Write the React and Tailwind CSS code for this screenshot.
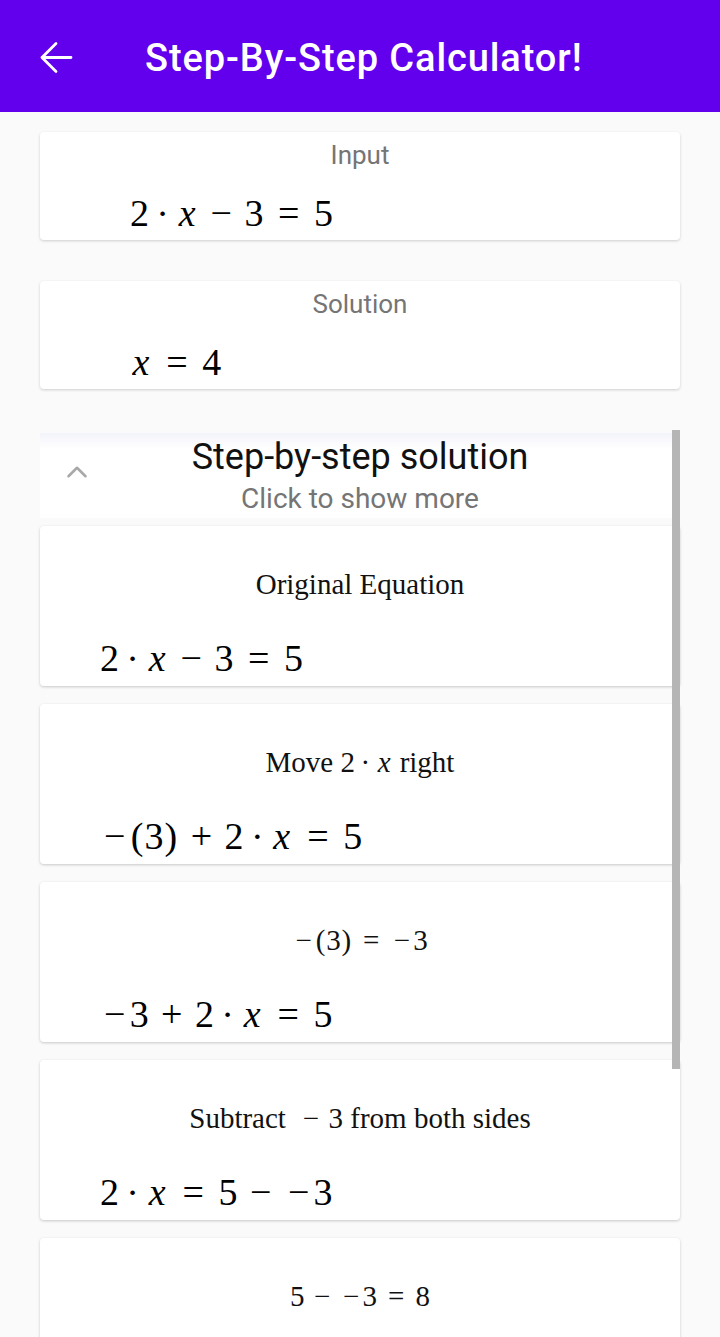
import { ChevronUp } from 'lucide-react'

const serif = { fontFamily: '"Liberation Serif", "DejaVu Serif", serif' }

// math pieces, widths roughly follow KaTeX spacing (in em)
const V = ({ children }) => <span className="inline-block w-[0.57em] text-center italic">{children}</span>
const Bin = ({ children }) => <span className="inline-block w-[1.22em] text-center">{children}</span>
const Rel = ({ children }) => <span className="inline-block w-[1.33em] text-center">{children}</span>
const Dot = () => <span className="inline-block w-[0.72em] text-center">·</span>
const Neg = () => <span className="inline-block w-[0.78em] text-center">−</span>
const P = ({ children }) => <span className="inline-block w-[0.39em] text-center">{children}</span>

function Eq({ children, className = '' }) {
  return (
    <div className={`whitespace-nowrap leading-none text-black ${className}`} style={{ fontFamily: '"Liberation Serif", serif' }}>
      {children}
    </div>
  )
}

function InfoCard({ label, children }) {
  return (
    <div className="h-[108px] bg-white rounded shadow-[0_1px_3px_rgba(0,0,0,0.18)] flex flex-col">
      <div className="text-center text-[26px] leading-none text-[#757575] pt-[10px]" style={{ fontFamily: 'Roboto, sans-serif' }}>
        {label}
      </div>
      <Eq className="text-[38px] pl-[90px] mt-[26px]">{children}</Eq>
    </div>
  )
}

function StepCard({ title, children }) {
  return (
    <div className="h-[160px] bg-white rounded shadow-[0_1px_3px_rgba(0,0,0,0.2)] flex flex-col">
      <div className="text-center text-[29px] leading-none text-[#111] pt-[44px] whitespace-nowrap" style={serif}>
        {title}
      </div>
      {children && <Eq className="text-[38px] pl-[60px] mt-[40px]">{children}</Eq>}
    </div>
  )
}

export default function App() {
  return (
    <div className="h-[1337px] overflow-hidden bg-[#fafafa]" style={{ fontFamily: 'Roboto, sans-serif' }}>
      {/* App bar */}
      <header className="h-[112px] bg-[#6200ee] flex items-center">
        <svg className="ml-[39px] mt-[2px]" width="34" height="33" viewBox="0 0 34 33" fill="none">
          <path d="M32 16.5H3M17 2.5L3 16.5l14 14" stroke="white" strokeWidth="2.8" strokeLinecap="round" strokeLinejoin="round" />
        </svg>
        <h1 className="ml-[72px] mt-[4px] text-white text-[38px] font-medium tracking-[0.9px]">Step-By-Step Calculator!</h1>
      </header>

      <main className="px-10 pt-5">
        <InfoCard label="Input">
          2<Dot /><V>x</V><Bin>−</Bin>3<Rel>=</Rel>5
        </InfoCard>

        <div className="mt-[41px]">
          <InfoCard label="Solution">
            <V>x</V><Rel>=</Rel>4
          </InfoCard>
        </div>

        {/* Step-by-step list */}
        <section className="relative mt-[44px]">
          <div className="h-[85px] bg-[linear-gradient(to_bottom,#f3f3fb,#ffffff_16px)] grid grid-cols-[60px_1fr_60px] items-center">
            <ChevronUp className="ml-[20px] -mt-[8px] text-[#a8a8a8]" size={34} strokeWidth={1.8} />
            <div className="text-center">
              <div className="text-[36px] leading-none text-[#111]">Step-by-step solution</div>
              <div className="text-[28px] leading-none text-[#757575] mt-[10px]">Click to show more</div>
            </div>
            <div />
          </div>

          <div className="mt-2 flex flex-col gap-[18px]">
            <StepCard title="Original Equation">
              2<Dot /><V>x</V><Bin>−</Bin>3<Rel>=</Rel>5
            </StepCard>
            <StepCard title={<>Move 2<Dot /><V>x</V> right</>}>
              <Neg /><P>(</P>3<P>)</P><Bin>+</Bin>2<Dot /><V>x</V><Rel>=</Rel>5
            </StepCard>
            <StepCard title={<><Neg /><P>(</P>3<P>)</P><Rel>=</Rel><Neg />3</>}>
              <Neg />3<Bin>+</Bin>2<Dot /><V>x</V><Rel>=</Rel>5
            </StepCard>
            <StepCard title={<>Subtract <Bin>−</Bin>3 from both sides</>}>
              2<Dot /><V>x</V><Rel>=</Rel>5<Bin>−</Bin><Neg />3
            </StepCard>
            <StepCard title={<>5<Bin>−</Bin><Neg />3<Rel>=</Rel>8</>} />
          </div>

          {/* scroll indicator */}
          <div className="absolute right-0 top-[-3px] w-2 h-[639px] bg-[#b5b5b5]" />
        </section>
      </main>
    </div>
  )
}
